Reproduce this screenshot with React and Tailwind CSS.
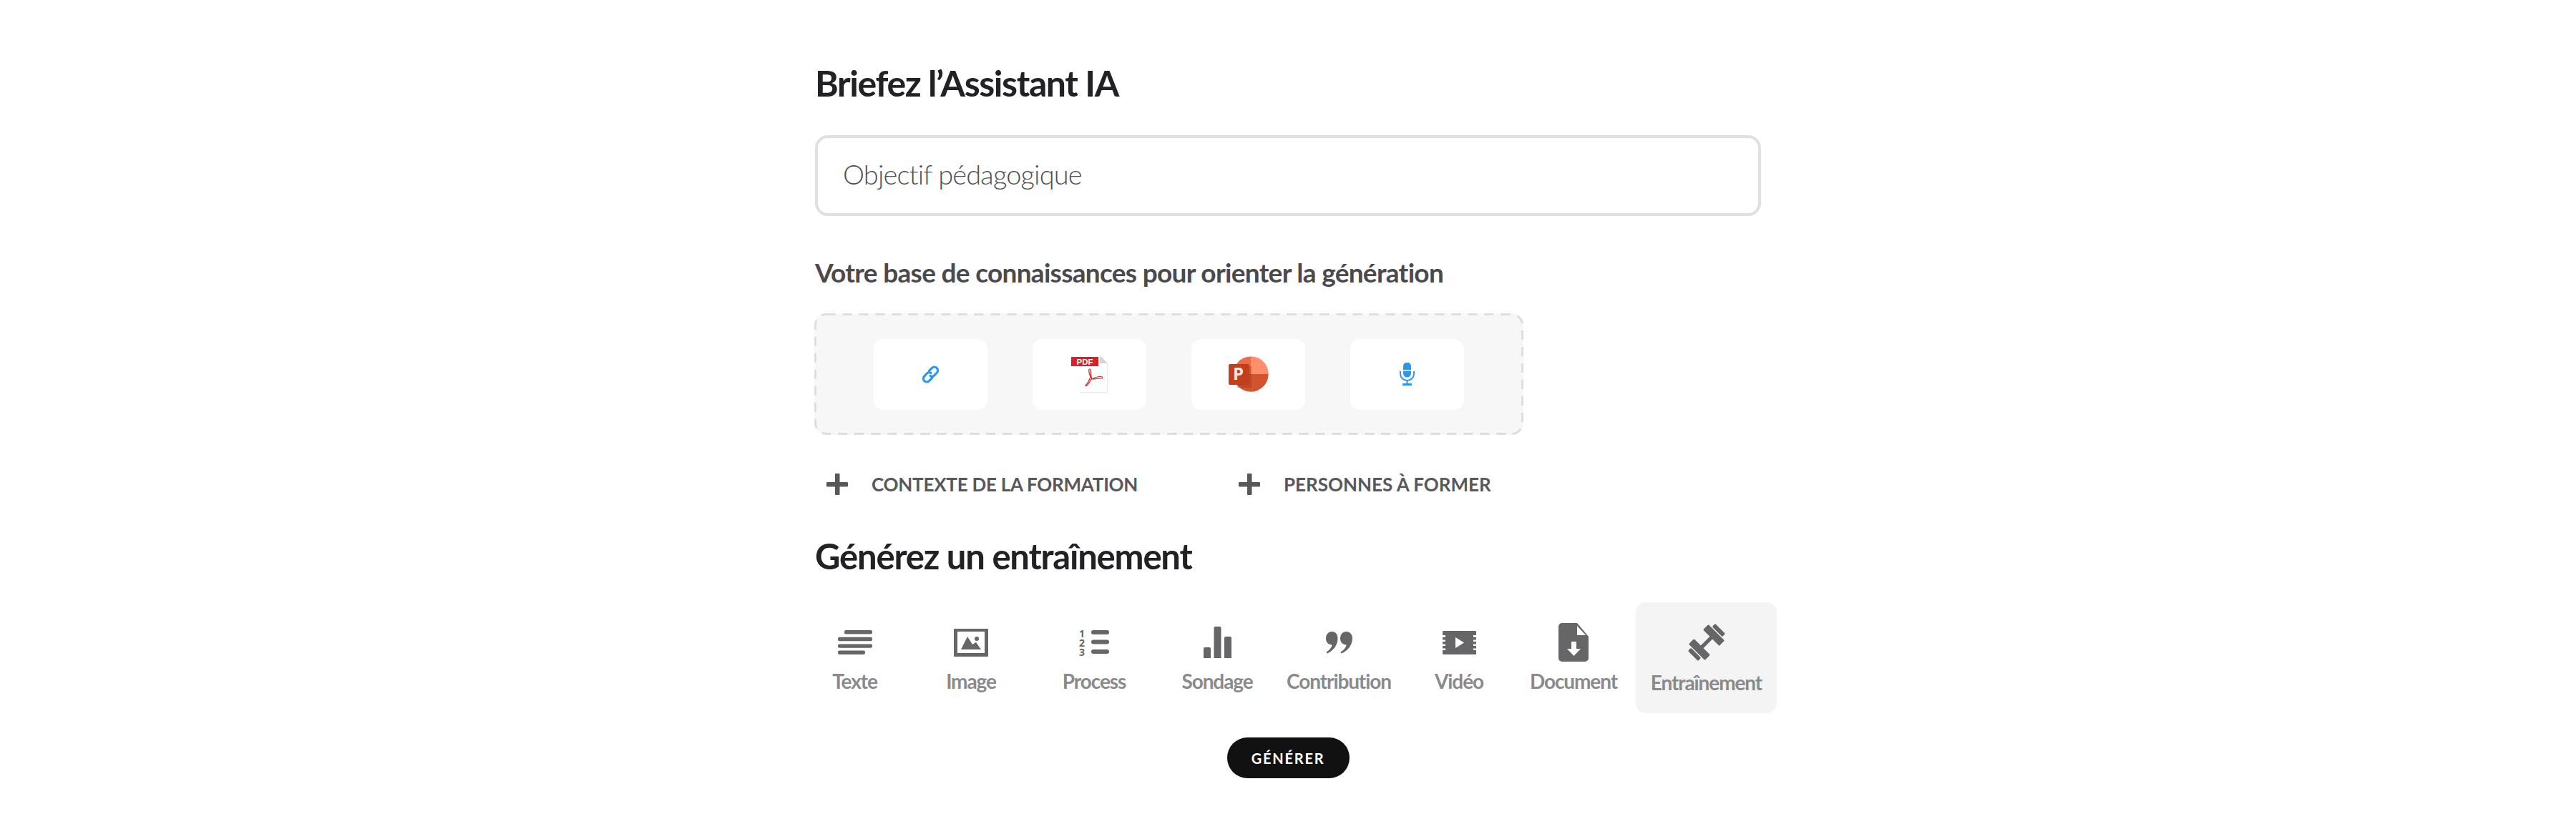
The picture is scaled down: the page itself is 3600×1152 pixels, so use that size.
import React from "react";

const G = "#666668";

function IconTexte() {
  return (
    <svg width="50" height="34" viewBox="0 0 50 34" fill={G}>
      <rect x="10" y="0" width="39" height="5.4" rx="2.2" />
      <rect x="1" y="9.8" width="48" height="5.4" rx="2.2" />
      <rect x="1" y="19.4" width="48" height="5.4" rx="2.2" />
      <rect x="1" y="28.6" width="38" height="5.4" rx="2.2" />
    </svg>
  );
}
function IconImage() {
  return (
    <svg width="48" height="39" viewBox="0 0 48 39" fill={G}>
      <path fillRule="evenodd" d="M1 0h46a1 1 0 0 1 1 1v37a1 1 0 0 1-1 1H1a1 1 0 0 1-1-1V1a1 1 0 0 1 1-1zM5 4v30h38V4z" />
      <path d="M10 29 L19 11 L26 22 L31 19 L38 29 Z" />
      <circle cx="32" cy="14" r="3" />
    </svg>
  );
}
function IconProcess() {
  const t = { fontSize: 14, fontWeight: 700, fontFamily: "'Open Sans', sans-serif" };
  return (
    <svg width="42" height="45" viewBox="0 -4 42 45" fill={G}>
      <text x="0" y="10.5" {...t}>1</text>
      <text x="0" y="24" {...t}>2</text>
      <text x="0" y="37" {...t}>3</text>
      <rect x="17" y="1" width="25" height="6" rx="3" />
      <rect x="17" y="14.5" width="25" height="6" rx="3" />
      <rect x="17" y="28" width="25" height="6" rx="3" />
    </svg>
  );
}
function IconSondage() {
  return (
    <svg width="39" height="44" viewBox="0 0 39 44" fill={G}>
      <path d="M0 44V31a2 2 0 0 1 2-2h6a2 2 0 0 1 2 2v13z" />
      <path d="M14.5 44V2a2 2 0 0 1 2-2h6a2 2 0 0 1 2 2v42z" />
      <path d="M29 44V16a2 2 0 0 1 2-2h6a2 2 0 0 1 2 2v28z" />
    </svg>
  );
}
function IconQuote() {
  return (
    <svg width="37" height="31" viewBox="0 0 37 31" fill={G}>
      <path d="M8.5 0C13.5 0 16.5 4 16.5 9.5C16.5 19 10 27.5 1.5 30.5L0.5 28.5C5 26 8 22.5 8.5 18.5C3.5 18.5 0 15 0 9.5C0 4 3.5 0 8.5 0Z" />
      <path d="M28.5 0C33.5 0 37 4 37 9.5C37 19 30 27.5 21.5 30.5L20.5 28.5C25 26 28 22.5 28.5 18.5C23.5 18.5 20 15 20 9.5C20 4 23.5 0 28.5 0Z" />
    </svg>
  );
}
function IconVideo() {
  return (
    <svg width="47" height="33" viewBox="0 0 47 33" fill={G}>
      <path
        fillRule="evenodd"
        d="M1 0H46a1 1 0 0 1 1 1V6H43V9H47V12.5H43V15H47V18.5H43V21H47V24.5H43V27H47V32a1 1 0 0 1-1 1H1a1 1 0 0 1-1-1V27H4V24.5H0V21H4V18.5H0V15H4V12.5H0V9H4V6H0V1a1 1 0 0 1 1-1ZM18 9V24L30 16.5Z"
      />
    </svg>
  );
}
function IconDocument() {
  return (
    <svg width="42" height="54" viewBox="0 0 42 54" fill={G}>
      <path
        fillRule="evenodd"
        d="M5 0H26L42 19V49a5 5 0 0 1-5 5H5a5 5 0 0 1-5-5V5a5 5 0 0 1 5-5ZM26 4V17H38L26 4ZM18 26V36H12L21.5 46L31 36H25V26Z"
      />
    </svg>
  );
}
function IconDumbbell() {
  return (
    <svg width="54" height="54" viewBox="-27 -27 54 54" fill={G}>
      <g transform="rotate(-45)">
        <rect x="-10" y="-2.6" width="20" height="5.2" />
        <rect x="9" y="-16" width="10.5" height="32" rx="1.5" />
        <rect x="21" y="-10" width="6" height="20" rx="1.5" />
        <rect x="-19.5" y="-16" width="10.5" height="32" rx="1.5" />
        <rect x="-27" y="-10" width="6" height="20" rx="1.5" />
      </g>
    </svg>
  );
}
function IconLink() {
  return (
    <svg width="25" height="25" viewBox="0 0 25 25" fill="none" stroke="#2f96ee" strokeWidth="3.2" strokeLinecap="round">
      <path d="M10.5 7.5 L14.5 3.5 a4.4 4.4 0 0 1 6.6 0 a4.4 4.4 0 0 1 0.3 6.4 L17.5 14 a4.4 4.4 0 0 1 -5.5 0.5" />
      <path d="M14.5 17.5 L10.5 21.5 a4.4 4.4 0 0 1 -6.6 0 a4.4 4.4 0 0 1 -0.3 -6.4 L7.5 11 a4.4 4.4 0 0 1 5.5 -0.5" />
    </svg>
  );
}
function IconPdf() {
  return (
    <svg width="51" height="52" viewBox="0 0 51 52">
      <path d="M12 0H40L51 11V52H12Z" fill="#ffffff" />
      <path d="M12 51.5H50.5V11" fill="none" stroke="#e8e8e8" strokeWidth="1" />
      <path d="M40 0L51 11H40Z" fill="#d4d4d4" />
      <rect x="0" y="2" width="38" height="13" fill="#dc1f26" />
      <text x="19" y="13" textAnchor="middle" fontSize="11.5" fontWeight="700" fill="#ffffff" fontFamily="'Liberation Sans', sans-serif">PDF</text>
      <path
        d="M26 19C24 19 24.5 24 27 30C24.5 36 22 40 21 41C19 43 21 43.5 23 41C25 38.5 27 34.5 28 33C31.5 33 38 32 43 32C44.5 31 43.5 29.5 41 29.5C37 29.5 32 31 29 33C28 30.5 27 26 27.5 22C27.5 20 27 19 26 19Z"
        fill="none"
        stroke="#dc1f26"
        strokeWidth="1.2"
      />
    </svg>
  );
}
function IconPpt() {
  return (
    <svg width="56" height="50" viewBox="0 0 56 50">
      <circle cx="31" cy="25" r="24.5" fill="#ed6c47" />
      <path d="M31 .5A24.5 24.5 0 0 1 55.5 25H31Z" fill="#ff8f6b" />
      <path d="M31 25H55.5A24.5 24.5 0 0 1 31 49.5A24.5 24.5 0 0 1 12 40V25Z" fill="#d35230" />
      <rect x="12" y="14" width="20" height="30" fill="#8f3a1f" opacity="0.35" />
      <rect x="0" y="11" width="29" height="29" rx="2" fill="#c43e1c" />
      <text x="13.5" y="33" textAnchor="middle" fontSize="24" fontWeight="700" fill="#f7ece8" fontFamily="'Open Sans', sans-serif">P</text>
    </svg>
  );
}
function IconMic() {
  return (
    <svg width="21" height="32" viewBox="0 0 21 32" fill="#2f96ee">
      <path d="M5 5a5.5 5.5 0 0 1 11 0v5H5z" />
      <path d="M5 11.5h11V15a5.5 5.5 0 0 1-11 0z" />
      <path d="M1 12v3.5a9.5 9.5 0 0 0 19 0V12" fill="none" stroke="#2f96ee" strokeWidth="2" />
      <rect x="9.5" y="24" width="2" height="5" />
      <rect x="4" y="29" width="13" height="3" rx="0.5" />
    </svg>
  );
}
function Plus() {
  return (
    <svg width="30" height="30" viewBox="0 0 30 30" fill="#58585a">
      <rect x="12" y="0" width="6.5" height="30" rx="1" />
      <rect x="0" y="12" width="30" height="6.5" rx="1" />
    </svg>
  );
}

const tools = [
  { label: "Texte", cls: "w-[111px]", icon: <IconTexte /> },
  { label: "Image", cls: "w-[120px] ml-[47px]", icon: <IconImage /> },
  { label: "Process", cls: "w-[130px] ml-[47px]", icon: <IconProcess /> },
  { label: "Sondage", cls: "w-[130px] ml-[42px]", icon: <IconSondage /> },
  { label: "Contribution", cls: "w-[160px] ml-[25px]", icon: <IconQuote /> },
  { label: "Vidéo", cls: "w-[100px] ml-[38px]", icon: <IconVideo /> },
  { label: "Document", cls: "w-[130px] ml-[45px]", icon: <IconDocument /> },
  {
    label: "Entraînement",
    cls: "w-[197px] ml-[22px] bg-[#f4f4f4] rounded-[14px]",
    icon: <IconDumbbell />,
    active: true,
  },
];

const sources = [<IconLink />, <IconPdf />, <IconPpt />, <IconMic />];

export default function App() {
  return (
    <div className="min-h-[1152px] bg-white font-['Lato',sans-serif]">
      <div className="mx-auto w-[1322px] pt-[88px]">
        <h1 className="h-[56px] text-[50px] leading-[56px] font-bold tracking-[-1.4px] text-[#222226]">
          Briefez l’Assistant IA
        </h1>
        <div className="mt-[45px] flex h-[113px] items-center rounded-[18px] border-4 border-[#e0e0e0] bg-white pb-[4px] pl-[35px] text-[38px] font-light tracking-[-0.85px] text-[#505053]">
          Objectif pédagogique
        </div>
        <h2 className="mt-[58px] h-[42px] text-[37px] leading-[42px] font-bold tracking-[-0.7px] text-[#4a4a4e]">
          Votre base de connaissances pour orienter la génération
        </h2>
        <div className="relative mt-[36px] -ml-[1px] flex h-[170px] w-[991px] items-center justify-center gap-[63px] rounded-[16px] bg-[#f7f7f7]">
          <svg className="absolute inset-0 h-full w-full" fill="none">
            <rect x="1.5" y="1.5" width="988" height="167" rx="15" stroke="#dedede" strokeWidth="3" strokeDasharray="13 10" />
          </svg>
          {sources.map((icon, i) => (
            <div key={i} className="relative flex h-[99px] w-[159px] items-center justify-center rounded-[14px] bg-white">
              {icon}
            </div>
          ))}
        </div>
        <div className="mt-[49px] flex h-[40px] items-center text-[26px] font-bold tracking-[-0.25px] text-[#58585a]">
          <div className="flex w-[592px] items-center gap-[33px] pl-[16px]">
            <Plus />
            <span>CONTEXTE DE LA FORMATION</span>
          </div>
          <div className="flex items-center gap-[33px]">
            <Plus />
            <span className="tracking-[0px]">PERSONNES À FORMER</span>
          </div>
        </div>
        <h2 className="mt-[52px] h-[56px] text-[49px] leading-[56px] font-bold tracking-[-1.2px] text-[#222226]">
          Générez un entraînement
        </h2>
        <div className="mt-[37px] flex h-[155px]">
          {tools.map((t) => (
            <div key={t.label} className={`flex shrink-0 flex-col items-center pt-[26px] ${t.cls}`}>
              <div className="flex h-[60px] items-center justify-center">{t.icon}</div>
              <span className={`text-[28px] leading-[36px] font-bold tracking-[-1.1px] text-[#8a8a8c] ${t.active ? "mt-[8px]" : "mt-[6px]"}`}>
                {t.label}
              </span>
            </div>
          ))}
        </div>
        <div className="mt-[34px] flex justify-center">
          <button className="flex h-[57px] w-[171px] items-center justify-center rounded-full bg-[#111112] text-[20px] font-bold tracking-[1.8px] text-white">
            GÉNÉRER
          </button>
        </div>
      </div>
    </div>
  );
}
